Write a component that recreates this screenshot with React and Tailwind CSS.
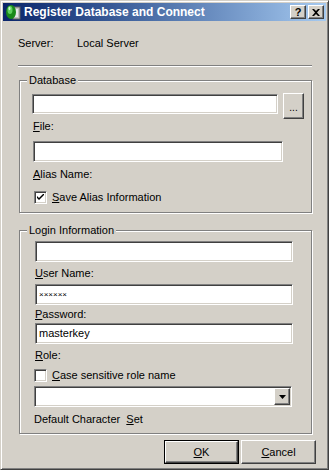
import React from 'react';

const sunken = "bg-white border border-t-[#808080] border-l-[#808080] border-r-white border-b-white shadow-[inset_1px_1px_0_#404040,inset_-1px_-1px_0_#d4d0c8]";
const raised = "bg-[#d4d0c8] border border-t-white border-l-white border-r-[#404040] border-b-[#404040] shadow-[inset_-1px_-1px_0_#808080,inset_1px_1px_0_#d4d0c8]";
const etched = "border border-[#808080] shadow-[inset_1px_1px_0_#fff,1px_1px_0_#fff]";

function Acc ({k, rest})
{
    return <span><span className="underline underline-offset-[1px]">{k}</span>{rest}</span>;
}

function Check ({checked, children, className})
{
    return (
        <div className={"flex items-center h-[13px] " + className}>
            <div className={"w-[13px] h-[13px] flex items-center justify-center " + sunken}>
                {checked && (
                    <svg width="7" height="7" viewBox="0 0 7 7">
                        <path d="M0 2 L0 4 L2 6 L7 1 L7 -1 L2 4 Z" fill="#000" />
                    </svg>
                )}
            </div>
            <span className="ml-[5px]">{children}</span>
        </div>
    );
}

function TitleIcon ()
{
    return (
        <svg width="16" height="16" viewBox="0 0 16 16">
            <rect x="8" y="3" width="7" height="12" fill="#c0c0c0" stroke="#606060" strokeWidth="1" />
            <rect x="10" y="5" width="3" height="8" fill="#e8e8e8" />
            <ellipse cx="6" cy="8" rx="5" ry="7" fill="#1a8a1a" />
            <ellipse cx="5" cy="6" rx="2.5" ry="4" fill="#5fd05f" />
            <ellipse cx="4.5" cy="4.5" rx="1" ry="1.8" fill="#c8f5c8" />
        </svg>
    );
}

export default function App ()
{
    return (
        <div className="w-[329px] h-[470px] bg-[#d4d0c8] font-['Liberation_Sans',Arial,sans-serif] text-[11px] leading-[13px] text-black overflow-hidden">
            <div className="w-[329px] h-[470px] p-[2px] border border-t-[#d4d0c8] border-l-[#d4d0c8] border-r-[#404040] border-b-[#404040] shadow-[inset_1px_1px_0_#fff,inset_-1px_-1px_0_#808080] flex flex-col">

                {/* Title bar */}
                <div className="h-[18px] flex items-center bg-gradient-to-r from-[#0a246a] to-[#a6caf0] pl-[2px] pr-[2px]">
                    <TitleIcon />
                    <span className="ml-[3px] text-white font-bold text-[12px] leading-[16px]">Register Database and Connect</span>
                    <div className="ml-auto flex gap-[2px]">
                        <div className={"w-[16px] h-[14px] flex items-center justify-center font-bold text-[11px] leading-none " + raised}>?</div>
                        <div className={"w-[16px] h-[14px] flex items-center justify-center " + raised}>
                            <svg width="8" height="7" viewBox="0 0 8 7">
                                <path d="M0 0 L2 0 L4 2 L6 0 L8 0 L5 3.5 L8 7 L6 7 L4 5 L2 7 L0 7 L3 3.5 Z" fill="#000" />
                            </svg>
                        </div>
                    </div>
                </div>

                {/* Server */}
                <div className="mt-[16px] ml-[15px] flex">
                    <span className="w-[59px]">Server:</span>
                    <span>Local Server</span>
                </div>

                <div className="mt-[15px] ml-[15px] w-[294px] h-[2px] border-t border-t-[#808080] border-b border-b-white" />

                {/* Database */}
                <fieldset className={"mt-[7px] ml-[16px] w-[293px] " + etched}>
                    <legend className="ml-[7px] px-[2px] bg-[#d4d0c8]">Database</legend>
                    <div className="pb-[8px]">
                        <div className="mt-[7px] flex items-start">
                            <div className={"ml-[12px] w-[246px] h-[20px] " + sunken} />
                            <div className={"ml-[5px] -mt-[1px] w-[21px] h-[26px] flex items-end justify-center pb-[5px] text-[10px] leading-none " + raised}>...</div>
                        </div>
                        <div className="mt-[1px] ml-[13px]"><Acc k="F" rest="ile:" /></div>
                        <div className={"mt-[8px] ml-[13px] w-[250px] h-[21px] " + sunken} />
                        <div className="mt-[6px] ml-[13px]"><Acc k="A" rest="lias Name:" /></div>
                        <Check checked className="mt-[10px] ml-[14px]"><Acc k="S" rest="ave Alias Information" /></Check>
                    </div>
                </fieldset>

                {/* Login Information */}
                <fieldset className={"mt-[11px] ml-[16px] w-[293px] " + etched}>
                    <legend className="ml-[7px] px-[2px] bg-[#d4d0c8]">Login Information</legend>
                    <div className="pb-[7px]">
                        <div className={"mt-[4px] ml-[15px] w-[258px] h-[21px] " + sunken} />
                        <div className="mt-[5px] ml-[15px]"><Acc k="U" rest="ser Name:" /></div>
                        <div className={"mt-[4px] ml-[15px] w-[258px] h-[21px] flex items-center pl-[3px] text-[8px] leading-none " + sunken}>××××××</div>
                        <div className="mt-[3px] ml-[15px]"><Acc k="P" rest="assword:" /></div>
                        <div className={"mt-[2px] ml-[15px] w-[258px] h-[21px] flex items-center pl-[3px] " + sunken}>masterkey</div>
                        <div className="mt-[5px] ml-[15px]"><Acc k="R" rest="ole:" /></div>
                        <Check className="mt-[7px] ml-[14px]"><Acc k="C" rest="ase sensitive role name" /></Check>
                        <div className={"mt-[4px] ml-[14px] w-[258px] h-[21px] flex justify-end items-center pr-[1px] " + sunken}>
                            <div className={"w-[16px] h-[17px] flex items-center justify-center " + raised}>
                                <svg width="7" height="4" viewBox="0 0 7 4">
                                    <path d="M0 0 L7 0 L3.5 4 Z" fill="#000" />
                                </svg>
                            </div>
                        </div>
                        <div className="mt-[6px] ml-[14px] whitespace-pre">Default Character  <Acc k="S" rest="et" /></div>
                    </div>
                </fieldset>

                {/* Buttons */}
                <div className="mt-[6px] ml-[161px] flex gap-[2px]">
                    <div className="w-[75px] h-[24px] border border-black">
                        <div className={"w-full h-full flex items-center justify-center " + raised}><Acc k="O" rest="K" /></div>
                    </div>
                    <div className={"w-[75px] h-[24px] flex items-center justify-center " + raised}><Acc k="C" rest="ancel" /></div>
                </div>
            </div>
        </div>
    );
}
